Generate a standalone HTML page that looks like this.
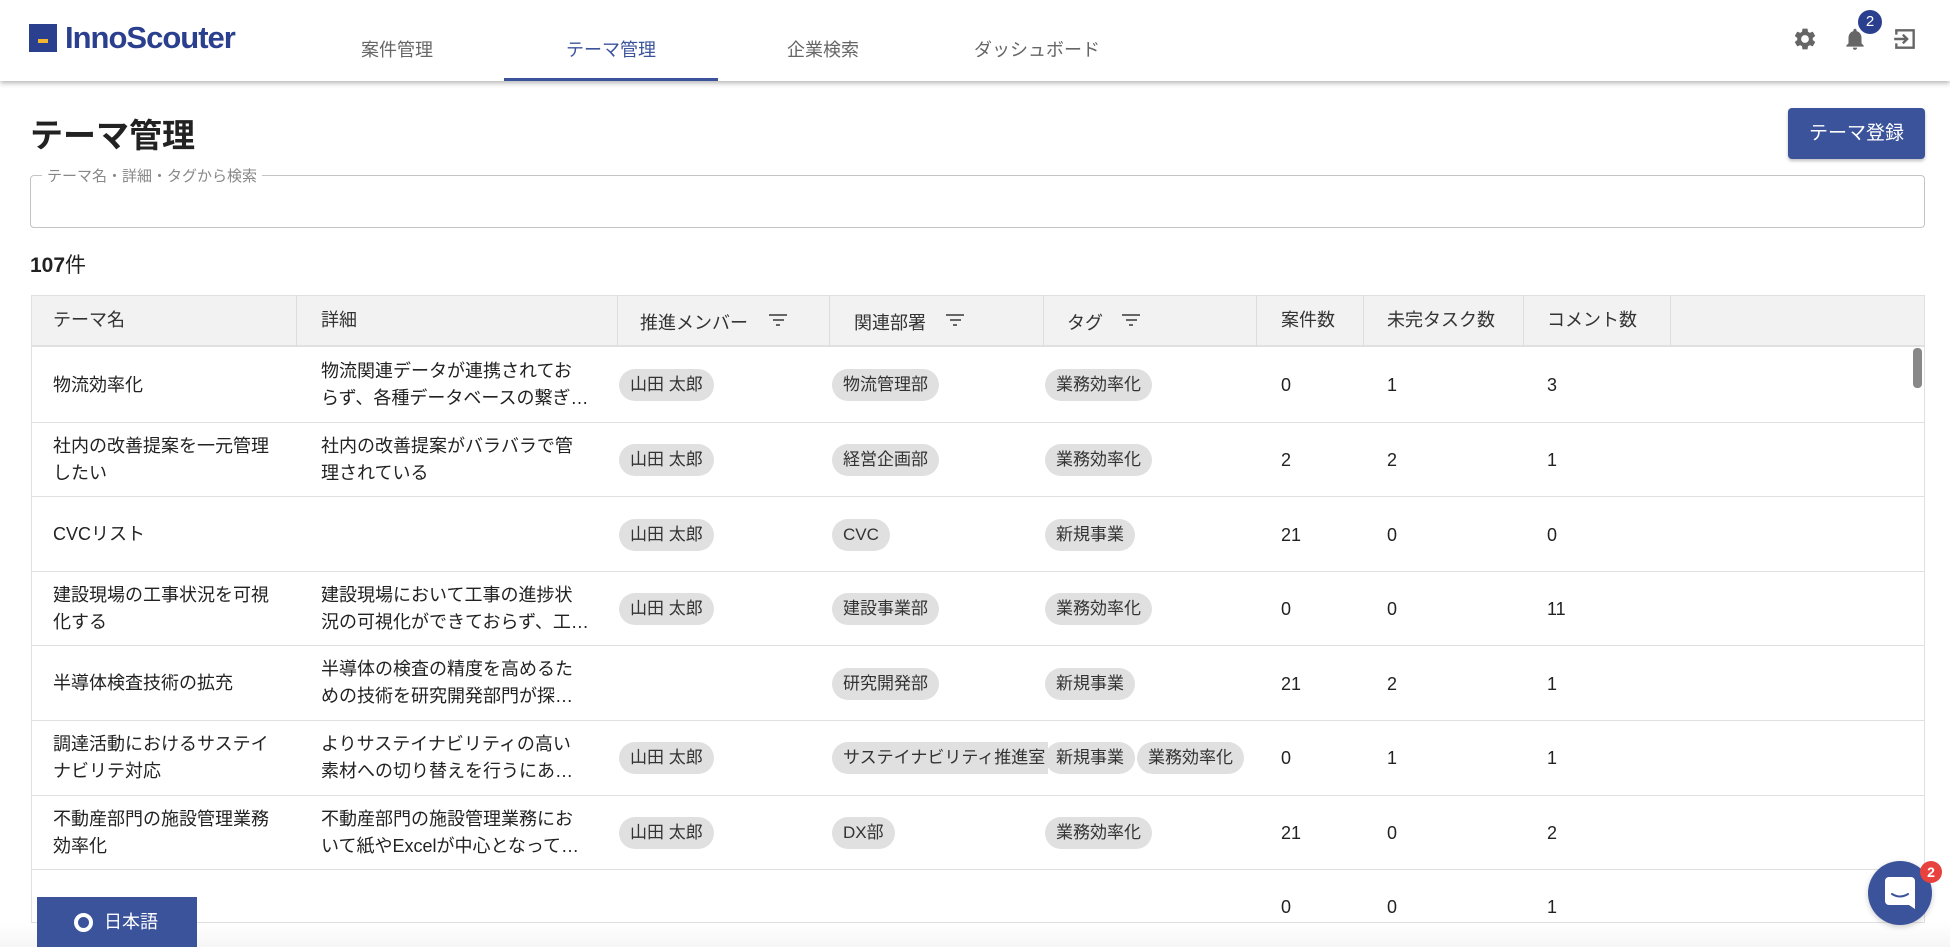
<!DOCTYPE html>
<html><head><meta charset="utf-8"><style>
*{box-sizing:border-box;margin:0;padding:0}
body{width:1950px;height:947px;overflow:hidden;background:#fff;font-family:"Liberation Sans","Noto Sans CJK JP",sans-serif;color:#222;position:relative}
.a{position:absolute;white-space:nowrap}
.hdr{position:absolute;left:0;top:0;width:1950px;height:81px;background:#fff;box-shadow:0 2px 5px rgba(0,0,0,.3);z-index:2}
.nav{position:absolute;top:36px;font-size:18px;color:#666;transform:translateX(-50%)}
.t{font-size:18px;line-height:27px;color:#222}
.chip{position:absolute;height:32px;line-height:32px;padding:0 11px;background:#e0e0e0;border-radius:16px;font-size:17px;color:#333;white-space:nowrap}
.hl{position:absolute;height:1px;background:#e0e0e0;left:31px;width:1894px}
.vl{position:absolute;top:295px;height:52px;width:1px;background:#ddd}
.th{position:absolute;top:306px;font-size:18px;color:#333}
.f{position:absolute;top:314px;width:18px}
.f i{display:block;height:2px;background:#666;margin:0 auto 3px}
</style></head><body>
<div class="hdr">
 <div class="a" style="left:29px;top:24px;width:28px;height:28px;background:#2b3f8f"><div style="position:absolute;left:9px;top:15px;width:10px;height:4px;background:#f2b631"></div></div>
 <div class="a" style="left:65px;top:20px;font-size:31px;font-weight:bold;color:#2b3f8f;letter-spacing:-1px">InnoScouter</div>
 <div class="nav" style="left:397px">案件管理</div>
 <div class="nav" style="left:611px;color:#3b539b">テーマ管理</div>
 <div class="a" style="left:504px;top:78px;width:214px;height:3px;background:#3b539b"></div>
 <div class="nav" style="left:823px">企業検索</div>
 <div class="nav" style="left:1037px">ダッシュボード</div>
 <svg class="a" style="left:1792px;top:26px" width="26" height="26" viewBox="0 0 24 24"><path fill="#666" d="M19.14 12.94c.04-.3.06-.61.06-.94s-.02-.64-.07-.94l2.030-1.58a.49.49 0 0 0 .12-.61l-1.92-3.32a.49.49 0 0 0-.59-.22l-2.39.96c-.5-.38-1.03-.7-1.62-.94l-.36-2.54a.48.48 0 0 0-.48-.41h-3.84c-.24 0-.43.17-.47.41l-.36 2.54c-.59.24-1.130.57-1.62.94l-2.39-.96c-.22-.08-.47 0-.59.22L2.74 8.87c-.12.21-.08.47.12.61l2.030 1.58c-.05.3-.09.63-.09.94s.02.64.07.94l-2.030 1.58a.49.49 0 0 0-.12.61l1.92 3.32c.12.22.37.29.59.22l2.39-.96c.5.38 1.030.7 1.62.94l.36 2.54c.05.24.24.41.48.41h3.84c.24 0 .44-.17.47-.41l.36-2.54c.59-.24 1.130-.56 1.62-.94l2.39.96c.22.08.47 0 .59-.22l1.92-3.32c.12-.22.07-.47-.12-.61l-2.010-1.58zM12 15.6A3.6 3.6 0 1 1 12 8.4a3.6 3.6 0 0 1 0 7.2z"/></svg>
 <svg class="a" style="left:1842px;top:25px" width="26" height="28" viewBox="0 0 24 24"><path fill="#666" d="M12 22c1.1 0 2-.9 2-2h-4a2 2 0 0 0 2 2zm6-6v-5c0-3.07-1.64-5.64-4.5-6.32V4c0-.83-.67-1.5-1.5-1.5s-1.5.67-1.5 1.5v.68C7.63 5.36 6 7.92 6 11v5l-2 2v1h16v-1l-2-2z"/></svg>
 <div class="a" style="left:1858px;top:10px;width:24px;height:24px;border-radius:50%;background:#2b3f8f;color:#fff;font-size:15px;text-align:center;line-height:24px">2</div>
 <svg class="a" style="left:1892px;top:26px" width="26" height="26" viewBox="0 0 24 24"><path fill="none" stroke="#666" stroke-width="2.2" d="M4 8V4h16v16H4v-4M2 12h11M10 8l4 4-4 4"/></svg>
</div>
<div class="a" style="left:30px;top:109px;font-size:33px;font-weight:bold;color:#222">テーマ管理</div>
<div class="a" style="left:1788px;top:108px;width:137px;height:51px;background:#3b539b;border-radius:4px;color:#fff;font-size:19px;text-align:center;line-height:51px;box-shadow:0 2px 3px rgba(0,0,0,.25)">テーマ登録</div>
<div class="a" style="left:30px;top:175px;width:1895px;height:53px;border:1.5px solid #c4c4c4;border-radius:4px"></div>
<div class="a" style="left:42px;top:165px;padding:0 5px;background:#fff;font-size:15px;color:#888">テーマ名・詳細・タグから検索</div>
<div class="a" style="left:30px;top:249px;font-size:21px;color:#222"><b>107</b>件</div>
<div class="a" style="left:31px;top:295px;width:1894px;height:628px;border:1px solid #e0e0e0"></div>
<div class="a" style="left:32px;top:296px;width:1892px;height:51px;background:#f2f2f2;border-bottom:2px solid #e0e0e0"></div>
<div class="vl" style="left:296px"></div><div class="vl" style="left:617px"></div><div class="vl" style="left:829px"></div><div class="vl" style="left:1043px"></div><div class="vl" style="left:1256px"></div><div class="vl" style="left:1363px"></div><div class="vl" style="left:1523px"></div><div class="vl" style="left:1670px"></div>
<div class="th" style="left:53px">テーマ名</div><div class="th" style="left:321px">詳細</div><div class="th" style="left:640px;top:309px">推進メンバー</div><div class="th" style="left:854px;top:309px">関連部署</div><div class="th" style="left:1067px;top:309px">タグ</div><div class="th" style="left:1281px">案件数</div><div class="th" style="left:1387px">未完タスク数</div><div class="th" style="left:1547px">コメント数</div>
<div class="f" style="left:769px"><i style="width:18px"></i><i style="width:11px"></i><i style="width:4px"></i></div>
<div class="f" style="left:946px"><i style="width:18px"></i><i style="width:11px"></i><i style="width:4px"></i></div>
<div class="f" style="left:1122px"><i style="width:18px"></i><i style="width:11px"></i><i style="width:4px"></i></div>
<div class="hl" style="top:422px"></div><div class="hl" style="top:496px"></div><div class="hl" style="top:571px"></div><div class="hl" style="top:645px"></div><div class="hl" style="top:720px"></div><div class="hl" style="top:795px"></div><div class="hl" style="top:869px"></div>
<div class="a" style="left:1913px;top:348px;width:9px;height:40px;background:#888;border-radius:4px"></div>

<div class="a t" style="left:53px;top:372px">物流効率化</div>
<div class="a t" style="left:321px;top:358px">物流関連データが連携されてお<br>らず、各種データベースの繋ぎ…</div>
<div class="chip" style="left:619px;top:369px">山田 太郎</div><div class="chip" style="left:832px;top:369px">物流管理部</div><div class="chip" style="left:1045px;top:369px">業務効率化</div>
<div class="a t" style="left:1281px;top:372px">0</div><div class="a t" style="left:1387px;top:372px">1</div><div class="a t" style="left:1547px;top:372px">3</div>

<div class="a t" style="left:53px;top:433px">社内の改善提案を一元管理<br>したい</div>
<div class="a t" style="left:321px;top:433px">社内の改善提案がバラバラで管<br>理されている</div>
<div class="chip" style="left:619px;top:444px">山田 太郎</div><div class="chip" style="left:832px;top:444px">経営企画部</div><div class="chip" style="left:1045px;top:444px">業務効率化</div>
<div class="a t" style="left:1281px;top:447px">2</div><div class="a t" style="left:1387px;top:447px">2</div><div class="a t" style="left:1547px;top:447px">1</div>

<div class="a t" style="left:53px;top:521px">CVCリスト</div>
<div class="chip" style="left:619px;top:519px">山田 太郎</div><div class="chip" style="left:832px;top:519px">CVC</div><div class="chip" style="left:1045px;top:519px">新規事業</div>
<div class="a t" style="left:1281px;top:522px">21</div><div class="a t" style="left:1387px;top:522px">0</div><div class="a t" style="left:1547px;top:522px">0</div>

<div class="a t" style="left:53px;top:582px">建設現場の工事状況を可視<br>化する</div>
<div class="a t" style="left:321px;top:582px">建設現場において工事の進捗状<br>況の可視化ができておらず、工…</div>
<div class="chip" style="left:619px;top:593px">山田 太郎</div><div class="chip" style="left:832px;top:593px">建設事業部</div><div class="chip" style="left:1045px;top:593px">業務効率化</div>
<div class="a t" style="left:1281px;top:596px">0</div><div class="a t" style="left:1387px;top:596px">0</div><div class="a t" style="left:1547px;top:596px">11</div>

<div class="a t" style="left:53px;top:670px">半導体検査技術の拡充</div>
<div class="a t" style="left:321px;top:656px">半導体の検査の精度を高めるた<br>めの技術を研究開発部門が探…</div>
<div class="chip" style="left:832px;top:668px">研究開発部</div><div class="chip" style="left:1045px;top:668px">新規事業</div>
<div class="a t" style="left:1281px;top:671px">21</div><div class="a t" style="left:1387px;top:671px">2</div><div class="a t" style="left:1547px;top:671px">1</div>

<div class="a t" style="left:53px;top:731px">調達活動におけるサステイ<br>ナビリテ対応</div>
<div class="a t" style="left:321px;top:731px">よりサステイナビリティの高い<br>素材への切り替えを行うにあ…</div>
<div class="chip" style="left:619px;top:742px">山田 太郎</div>
<div class="a" style="left:832px;top:742px;width:216px;height:32px;overflow:hidden"><div class="chip" style="left:0;top:0;border-radius:16px 0 0 16px">サステイナビリティ推進室</div></div>
<div class="chip" style="left:1045px;top:742px">新規事業</div><div class="chip" style="left:1137px;top:742px">業務効率化</div>
<div class="a t" style="left:1281px;top:745px">0</div><div class="a t" style="left:1387px;top:745px">1</div><div class="a t" style="left:1547px;top:745px">1</div>

<div class="a t" style="left:53px;top:806px">不動産部門の施設管理業務<br>効率化</div>
<div class="a t" style="left:321px;top:806px">不動産部門の施設管理業務にお<br>いて紙やExcelが中心となって…</div>
<div class="chip" style="left:619px;top:817px">山田 太郎</div><div class="chip" style="left:832px;top:817px">DX部</div><div class="chip" style="left:1045px;top:817px">業務効率化</div>
<div class="a t" style="left:1281px;top:820px">21</div><div class="a t" style="left:1387px;top:820px">0</div><div class="a t" style="left:1547px;top:820px">2</div>

<div class="a t" style="left:1281px;top:894px">0</div><div class="a t" style="left:1387px;top:894px">0</div><div class="a t" style="left:1547px;top:894px">1</div>
<div class="a" style="left:0;top:923px;width:1950px;height:24px;background:linear-gradient(#fff,#f6f6f6)"></div>

<div class="a" style="left:37px;top:897px;width:160px;height:50px;background:#3b539b;color:#fff;font-size:18px;line-height:50px"><span style="position:absolute;left:37px;top:16px;width:19px;height:19px;border:4px solid #fff;border-radius:50%"></span><span style="position:absolute;left:67px">日本語</span></div>
<div class="a" style="left:1868px;top:861px;width:64px;height:64px;border-radius:50%;background:#3b539b;box-shadow:0 2px 6px rgba(0,0,0,.2)">
 <svg style="position:absolute;left:17px;top:16px" width="30" height="32" viewBox="0 0 30 32"><path fill="#fff" d="M4 0h22a4 4 0 0 1 4 4v28l-6-4H4a4 4 0 0 1-4-4V4a4 4 0 0 1 4-4z"/><path d="M7 17q8 5 16 0" stroke="#3b539b" stroke-width="2" fill="none" stroke-linecap="round"/></svg>
</div>
<div class="a" style="left:1920px;top:861px;width:22px;height:22px;border-radius:50%;background:#e8423f;color:#fff;font-size:14px;font-weight:bold;text-align:center;line-height:22px">2</div>
</body></html>
